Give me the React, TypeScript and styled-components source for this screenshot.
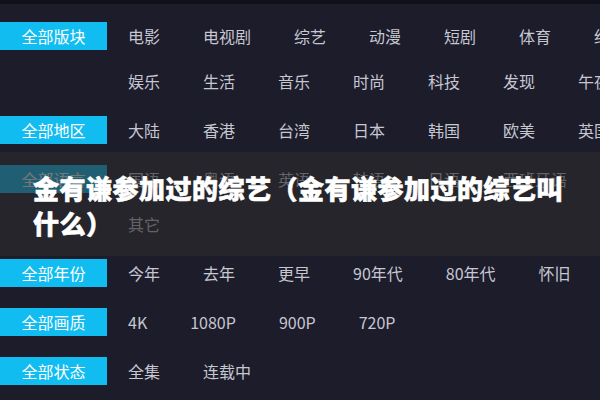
import React from "react";
import styled, { createGlobalStyle } from "styled-components";

const Global = createGlobalStyle`
  html, body {
    margin: 0;
    padding: 0;
    background: #1c1c2b;
  }
  * {
    box-sizing: border-box;
  }
`;

type GroupType = {
  label: string
  lines: string[][]
}

const groups: GroupType[] = [
  {
    label: "全部版块",
    lines: [
      ["电影", "电视剧", "综艺", "动漫", "短剧", "体育", "纪录片"],
      ["娱乐", "生活", "音乐", "时尚", "科技", "发现", "午夜"],
    ],
  },
  {
    label: "全部地区",
    lines: [["大陆", "香港", "台湾", "日本", "韩国", "欧美", "英国", "泰国"]],
  },
  {
    label: "全部语言",
    lines: [["国语", "粤语", "英语", "韩语", "日语", "西班牙语"], ["其它"]],
  },
  {
    label: "全部年份",
    lines: [["今年", "去年", "更早", "90年代", "80年代", "怀旧"]],
  },
  {
    label: "全部画质",
    lines: [["4K", "1080P", "900P", "720P"]],
  },
  {
    label: "全部状态",
    lines: [["全集", "连载中"]],
  },
];

const Page = styled.div`
  position: relative;
  width: 600px;
  height: 400px;
  overflow: hidden;
  background: #1c1c2b;
  border-top: 4px solid #11111c;
  padding-top: 18px;
  font-family: "Noto Sans CJK SC", "Noto Sans", sans-serif;
`;

const Group = styled.div`
  display: flex;
  padding-bottom: 21px;
`;

const Label = styled.div`
  flex-shrink: 0;
  width: 107px;
  height: 28px;
  background: #10bcf0;
  color: #ffffff;
  font-size: 16px;
  display: flex;
  align-items: center;
  justify-content: center;
`;

const Lines = styled.div`
  display: flex;
  flex-direction: column;
  gap: 17px;
  padding-left: 21px;
`;

const Line = styled.div`
  display: flex;
  gap: 43px;
  height: 28px;
  align-items: center;
  white-space: nowrap;
`;

const Item = styled.span`
  color: #c6c7d0;
  font-size: 16px;
`;

const Overlay = styled.div`
  position: absolute;
  left: 0;
  right: 0;
  top: 148px;
  height: 104px;
  background: rgba(42, 42, 44, 0.64);
  display: flex;
  align-items: center;
  padding: 2px 20px 0 33px;
`;

const Title = styled.h1`
  margin: 0;
  color: #ffffff;
  font-size: 26px;
  line-height: 35px;
  font-weight: 900;
  letter-spacing: 0.5px;
  -webkit-text-stroke: 0.6px #ffffff;
`;

export default function App() {
  return (
    <>
      <Global />
      <Page>
        {groups.map((g) => (
          <Group key={g.label}>
            <Label>{g.label}</Label>
            <Lines>
              {g.lines.map((line, i) => (
                <Line key={i}>
                  {line.map((item) => (
                    <Item key={item}>{item}</Item>
                  ))}
                </Line>
              ))}
            </Lines>
          </Group>
        ))}
        <Overlay>
          <Title>金有谦参加过的综艺（金有谦参加过的综艺叫什么）</Title>
        </Overlay>
      </Page>
    </>
  );
}
